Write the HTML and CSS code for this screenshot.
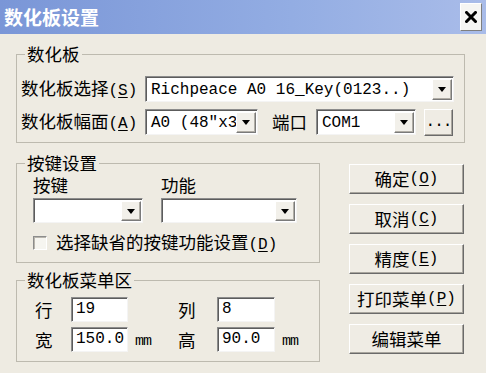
FILE: index.html
```html
<!DOCTYPE html>
<html lang="zh-CN">
<head>
<meta charset="utf-8">
<title>数化板设置</title>
<link rel="stylesheet" href="styles.css">
</head>
<body>
<div class="window">
  <div class="titlebar">
    <span class="title">数化板设置</span>
    <span class="close"><svg width="12" height="12" viewBox="0 0 12 12"><path d="M1.5 1.5 L10.5 10.5 M10.5 1.5 L1.5 10.5" stroke="#000" stroke-width="3" stroke-linecap="square"/></svg></span>
  </div>
  <div class="body">
    <fieldset class="group g1">
      <legend>数化板</legend>
      <div class="gbody">
        <div class="row">
          <span class="lbl lbl1">数化板选择<span class="acc">(<u>S</u>)</span></span>
          <div class="combo c1"><span class="val">Richpeace A0 16_Key(0123..)</span><span class="drop"><i class="tri"></i></span></div>
        </div>
        <div class="row row2">
          <span class="lbl lbl1">数化板幅面<span class="acc">(<u>A</u>)</span></span>
          <div class="combo c2"><span class="val">A0 (48"x3</span><span class="drop"><i class="tri"></i></span></div>
          <span class="lbl port">端口</span>
          <div class="combo c3"><span class="val">COM1</span><span class="drop"><i class="tri"></i></span></div>
          <span class="btn dots">...</span>
        </div>
      </div>
    </fieldset>
    <div class="lower">
      <div class="leftcol">
        <fieldset class="group g2">
          <legend>按键设置</legend>
          <div class="gbody">
            <div class="keygrid">
              <span class="lbl">按键</span>
              <span class="lbl">功能</span>
              <div class="combo c4"><span class="val"></span><span class="drop"><i class="tri"></i></span></div>
              <div class="combo c5"><span class="val"></span><span class="drop"><i class="tri"></i></span></div>
            </div>
            <div class="check">
              <span class="box"></span>
              <span class="lbl">选择缺省的按键功能设置<span class="acc">(<u>D</u>)</span></span>
            </div>
          </div>
        </fieldset>
        <fieldset class="group g3">
          <legend>数化板菜单区</legend>
          <div class="gbody">
            <div class="menugrid">
              <span class="lbl">行</span>
              <span class="edit">19</span>
              <span class="unit"></span>
              <span class="lbl">列</span>
              <span class="edit">8</span>
              <span class="unit"></span>
              <span class="lbl">宽</span>
              <span class="edit">150.0</span>
              <span class="unit">mm</span>
              <span class="lbl">高</span>
              <span class="edit">90.0</span>
              <span class="unit">mm</span>
            </div>
          </div>
        </fieldset>
      </div>
      <div class="btncol">
        <span class="btn">确定<span class="acc">(<u>O</u>)</span></span>
        <span class="btn">取消<span class="acc">(<u>C</u>)</span></span>
        <span class="btn">精度<span class="acc">(<u>E</u>)</span></span>
        <span class="btn">打印菜单<span class="acc">(<u>P</u>)</span></span>
        <span class="btn">编辑菜单</span>
      </div>
    </div>
  </div>
</div>
</body>
</html>
```
FILE: styles.css
```css
* { box-sizing: border-box; }
html, body { margin: 0; padding: 0; }
body {
  width: 486px;
  height: 373px;
  overflow: hidden;
  background: #eeebe2;
  font-family: "Noto Sans CJK SC", sans-serif;
  font-size: 17.5px;
  color: #000;
}
.window { width: 486px; height: 373px; }

.titlebar {
  height: 34px;
  display: flex;
  align-items: center;
  justify-content: space-between;
  padding: 0 4px 0 4px;
  background: linear-gradient(to right, #7a96d7, #93ade3 60%, #a9bce9);
}
.title {
  color: #fff;
  font-weight: 700;
  font-size: 19px;
  line-height: 22px;
}
.close {
  width: 22px;
  height: 28px;
  display: flex;
  align-items: center;
  justify-content: center;
  background: #f5f5f3;
  border: 1px solid;
  border-color: #ffffff #7f7f7f #7f7f7f #ffffff;
}

.body { padding: 10px 0 0 16px; }

.group {
  margin: 0;
  padding: 0;
  min-inline-size: 0;
  border: 1px solid #bdbaaf;
}
.group legend {
  margin-left: 8px;
  padding: 0 2px;
  height: 20px;
  line-height: 20px;
}
.lbl { line-height: 20px; white-space: nowrap; }
.acc {
  font-family: "Liberation Mono", monospace;
  font-size: 16px;
}
.acc u { text-underline-offset: 2px; }

/* group 1 */
.g1 { width: 449px; }
.g1 .gbody { padding: 12px 10px 7px 4px; }
.row { display: flex; align-items: center; height: 26px; }
.row2 { margin-top: 7px; }
.lbl1 { width: 124px; }
.port { margin-left: 14px; width: 44px; }

.combo {
  height: 26px;
  display: flex;
  align-items: center;
  justify-content: space-between;
  background: #fff;
  border: 1px solid;
  border-color: #8c8c8c #f4f4f4 #f4f4f4 #8c8c8c;
  box-shadow: inset 1px 1px 0 #5c5c5c;
  padding: 2px 1px 1px 2px;
}
.val {
  font-family: "Liberation Mono", monospace;
  font-size: 16px;
  line-height: 20px;
  padding-left: 3px;
  white-space: nowrap;
  overflow: hidden;
}
.drop {
  flex: none;
  width: 20px;
  height: 100%;
  display: flex;
  align-items: center;
  justify-content: center;
  background: #f2f0ea;
  border: 1px solid;
  border-color: #ffffff #7a7a7a #7a7a7a #ffffff;
  box-shadow: inset -1px -1px 0 #b0ada5;
}
.tri {
  width: 0;
  height: 0;
  border-left: 4px solid transparent;
  border-right: 4px solid transparent;
  border-top: 5px solid #000;
}
.c1 { width: 309px; }
.c2 { width: 113px; }
.c3 { width: 100px; }

.btn {
  display: flex;
  align-items: center;
  justify-content: center;
  background: #efece4;
  border: 1px solid;
  border-color: #ffffff #6a6a6a #6a6a6a #ffffff;
  box-shadow: inset -1px -1px 0 #a9a69e;
  line-height: 20px;
  white-space: nowrap;
}
.dots {
  width: 29px;
  height: 27px;
  margin-left: 8px;
  font-family: "Liberation Mono", monospace;
  font-size: 16px;
  align-items: flex-end;
  padding-bottom: 3px;
  letter-spacing: -1px;
}

/* lower area */
.lower { display: flex; margin-top: 10px; }
.leftcol { width: 304px; }
.g2, .g3 { width: 304px; }
.g2 .gbody { padding: 2px 0 9px 16px; }
.keygrid {
  display: grid;
  grid-template-columns: 128px auto;
  grid-template-rows: 20px 25px;
  row-gap: 3px;
  justify-items: start;
}
.c4 { width: 110px; height: 25px; }
.c5 { width: 136px; height: 25px; }
.check {
  display: flex;
  align-items: center;
  gap: 9px;
  height: 20px;
  margin-top: 10px;
}
.box {
  width: 14px;
  height: 14px;
  background: #f6f5f0;
  border: 1px solid;
  border-color: #8c8c8c #ffffff #ffffff #8c8c8c;
  box-shadow: inset 1px 1px 0 #b8b5ad;
}

.g3 { margin-top: 7px; }
.g3 .gbody { padding: 7px 0 9px 18px; }
.menugrid {
  display: grid;
  grid-template-columns: 36px 57px 50px 39px 58px auto;
  grid-template-rows: 25px 25px;
  row-gap: 5px;
  align-items: center;
}
.edit {
  height: 25px;
  background: #fff;
  border: 1px solid;
  border-color: #8c8c8c #f4f4f4 #f4f4f4 #8c8c8c;
  box-shadow: inset 1px 1px 0 #5c5c5c;
  font-family: "Liberation Mono", monospace;
  font-size: 16px;
  line-height: 21px;
  padding-left: 4px;
  padding-top: 1px;
}
.unit {
  font-family: "Liberation Mono", monospace;
  font-size: 15px;
  padding-left: 7px;
  padding-top: 4px;
  letter-spacing: -1px;
}

.btncol {
  margin-left: 29px;
  padding-top: 11px;
  display: flex;
  flex-direction: column;
  gap: 10px;
}
.btncol .btn { width: 115px; height: 30px; }
```
